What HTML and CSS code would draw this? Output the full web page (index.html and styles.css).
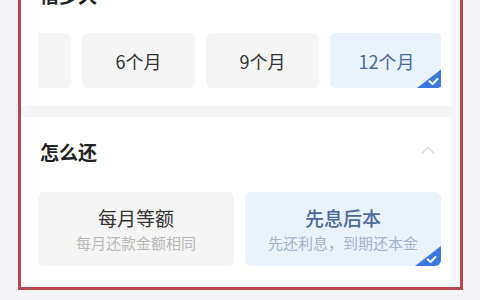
FILE: index.html
```html
<!DOCTYPE html>
<html lang="zh">
<head>
<meta charset="utf-8">
<link rel="stylesheet" href="styles.css">
</head>
<body>
<div class="frame">
  <section class="card card-top">
    <h2 class="title">借多久</h2>
    <div class="scroller">
      <div class="row">
        <div class="tile"></div>
        <div class="tile">6个月</div>
        <div class="tile">9个月</div>
        <div class="tile sel">12个月<span class="badge"><svg viewBox="0 0 26 20" width="26" height="20"><path d="M26 0 L26 15 Q26 20 21 20 L0 20 Z" fill="#3b78df"/><path d="M12.5 13.2 L15.6 16 L20.5 11" fill="none" stroke="#fff" stroke-width="2" stroke-linecap="round" stroke-linejoin="round"/></svg></span></div>
      </div>
    </div>
  </section>
  <div class="sep"></div>
  <section class="card card-bottom">
    <div class="head">
      <h2 class="title">怎么还</h2>
      <svg class="chev" viewBox="0 0 14 8" width="14" height="8"><path d="M1 7 L7 1.5 L13 7" fill="none" stroke="#d6d6d8" stroke-width="1.4" stroke-linecap="round"/></svg>
    </div>
    <div class="row2">
      <div class="tile2">
        <div class="t">每月等额</div>
        <div class="s">每月还款金额相同</div>
      </div>
      <div class="tile2 sel">
        <div class="t">先息后本</div>
        <div class="s">先还利息，到期还本金</div>
        <span class="badge"><svg viewBox="0 0 26 20" width="26" height="20"><path d="M26 0 L26 15 Q26 20 21 20 L0 20 Z" fill="#3b78df"/><path d="M12.5 13.2 L15.6 16 L20.5 11" fill="none" stroke="#fff" stroke-width="2" stroke-linecap="round" stroke-linejoin="round"/></svg></span>
      </div>
    </div>
  </section>
</div>
</body>
</html>
```

FILE: styles.css
```css
* { box-sizing: border-box; margin: 0; padding: 0; }
html, body { width: 480px; height: 300px; overflow: hidden; }
body {
  background: #f4f4f6;
  font-family: "Noto Sans CJK SC", "Noto Sans", sans-serif;
  color: #333;
}
.frame {
  margin-top: -43px;
  margin-left: 18px;
  width: 445px;
  border: 3px solid #b8474f;
  background: #f7f7f8;
  padding-right: 9px;
}
.card {
  background: #fff;
  padding: 23px 11px 0 17px;
}
.card-top { padding-bottom: 18px; }
.card-bottom { padding-bottom: 21px; border-top-right-radius: 6px; }
.title {
  font-size: 19px;
  line-height: 24px;
  font-weight: 700;
  color: #222;
  margin-left: 2px;
}
.scroller {
  margin-top: 26px;
  overflow: hidden;
  width: 403px;
}
.row {
  display: flex;
  gap: 11px;
  margin-left: -80px;
}
.tile {
  flex: 0 0 113px;
  height: 55px;
  border-radius: 6px;
  background: #f5f5f5;
  display: flex;
  align-items: center;
  justify-content: center;
  font-size: 18px;
  color: #333;
  position: relative;
  overflow: hidden;
}
.tile.sel, .tile2.sel {
  background: #e9f2fd;
  color: #4a6a9c;
}
.badge {
  position: absolute;
  right: 0;
  bottom: 0;
  width: 26px;
  height: 20px;
  display: block;
}
.badge svg { display: block; }
.sep {
  height: 11px;
  margin-left: 7px;
  background: #f5f5f7;
}
.head {
  display: flex;
  align-items: center;
  justify-content: space-between;
  padding-right: 5px;
}
.chev { margin-top: -4px; }
.row2 {
  margin-top: 28px;
  display: flex;
  gap: 11px;
  width: 403px;
}
.tile2 {
  flex: 1 1 0;
  height: 74px;
  border-radius: 6px;
  background: #f5f5f5;
  display: flex;
  flex-direction: column;
  align-items: center;
  justify-content: center;
  position: relative;
  overflow: hidden;
}
.tile2 .t {
  font-size: 19px;
  line-height: 24px;
  color: #333;
}
.tile2 .s {
  font-size: 15px;
  line-height: 20px;
  margin-top: 3px;
  color: #b8b8b8;
}
.tile2.sel .t { color: #4a6a9c; font-weight: 500; }
.tile2.sel .s { color: #a3b4cd; }
```
